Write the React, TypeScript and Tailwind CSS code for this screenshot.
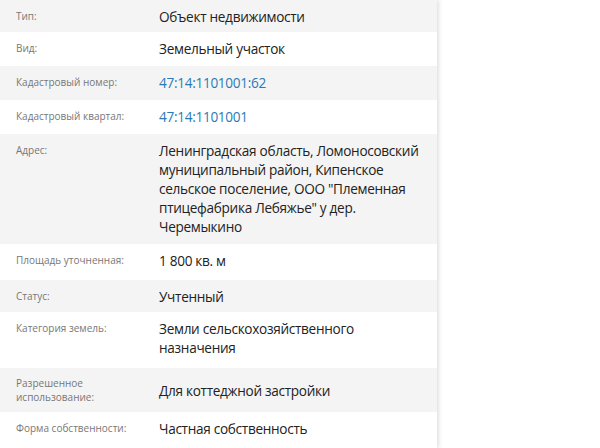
const rows: { label: string; value: string; link?: boolean; center?: boolean; h: string }[] = [
  { label: "Тип:", value: "Объект недвижимости", h: "h-[32px]" },
  { label: "Вид:", value: "Земельный участок", h: "h-[34px]" },
  { label: "Кадастровый номер:", value: "47:14:1101001:62", link: true, h: "h-[34px]" },
  { label: "Кадастровый квартал:", value: "47:14:1101001", link: true, h: "h-[34px]" },
  {
    label: "Адрес:",
    value:
      'Ленинградская область, Ломоносовский муниципальный район, Кипенское сельское поселение, ООО "Племенная птицефабрика Лебяжье" у дер. Черемыкино',
    h: "h-[110px]",
  },
  { label: "Площадь уточненная:", value: "1 800 кв. м", h: "h-[36px]" },
  { label: "Статус:", value: "Учтенный", h: "h-[32px]" },
  { label: "Категория земель:", value: "Земли сельскохозяйственного назначения", h: "h-[56px]" },
  { label: "Разрешенное использование:", value: "Для коттеджной застройки", center: true, h: "h-[44px]" },
  { label: "Форма собственности:", value: "Частная собственность", h: "h-[36px]" },
]

export default function App() {
  return (
    <div className="w-[600px] h-[448px] bg-white overflow-hidden" style={{ fontFamily: '"Open Sans", "Noto Sans", sans-serif' }}>
      <div className="w-[437px] shadow-[2px_0_4px_rgba(0,0,0,0.12)]">
        {rows.map((r, i) => (
          <div
            key={r.label}
            className={`flex ${r.h} ${r.center ? "items-center" : "items-start pt-[7px]"} ${i % 2 === 0 ? "bg-[#f4f4f4]" : "bg-white"}`}
          >
            <div className={`w-[159px] shrink-0 pl-4 pr-2 text-[10px] text-[#777] ${r.center ? "leading-[14px]" : "leading-[19px]"}`}>
              {r.label}
            </div>
            <div
              className={`text-[13.6px] leading-[19px] tracking-[-0.3px] ${r.link ? "text-[#2a7ab8]" : "text-[#222]"} w-[272px]`}
            >
              {r.value}
            </div>
          </div>
        ))}
      </div>
    </div>
  )
}
